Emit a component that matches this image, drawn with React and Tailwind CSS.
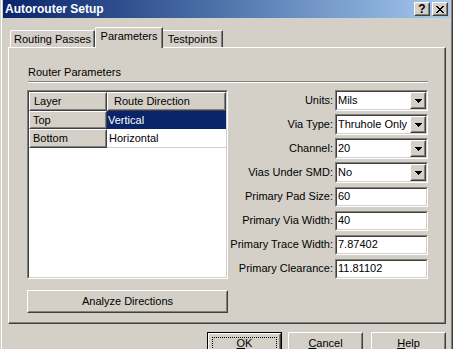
import React from "react";

function Raised({ className = "", inner = "", children }) {
  return (
    <div className={"border border-t-white border-l-white border-r-[#404040] border-b-[#404040] " + className}>
      <div className={"w-full h-full border border-t-[#D4D0C8] border-l-[#D4D0C8] border-r-[#808080] border-b-[#808080] " + inner}>
        {children}
      </div>
    </div>
  );
}

function Sunken({ className = "", inner = "", children }) {
  return (
    <div className={"border border-t-[#808080] border-l-[#808080] border-r-white border-b-white " + className}>
      <div className={"w-full h-full border border-t-[#404040] border-l-[#404040] border-r-[#D4D0C8] border-b-[#D4D0C8] " + inner}>
        {children}
      </div>
    </div>
  );
}

function Arrow() {
  return (
    <svg width="7" height="4" viewBox="0 0 7 4" shapeRendering="crispEdges">
      <rect x="0" y="0" width="7" height="1" fill="#000" />
      <rect x="1" y="1" width="5" height="1" fill="#000" />
      <rect x="2" y="2" width="3" height="1" fill="#000" />
      <rect x="3" y="3" width="1" height="1" fill="#000" />
    </svg>
  );
}

function Combo({ value }) {
  return (
    <Sunken className="h-[21px] w-[93px]" inner="bg-white flex items-center">
      <span className="flex-1 pl-[1px] leading-none whitespace-nowrap overflow-hidden">{value}</span>
      <Raised className="w-[16px] h-[17px] shrink-0 bg-[#D4D0C8]" inner="flex items-center justify-center">
        <Arrow />
      </Raised>
    </Sunken>
  );
}

function Edit({ value }) {
  return (
    <Sunken className="h-[20px] w-[93px]" inner="bg-white flex items-center">
      <span className="pl-[1px] leading-none">{value}</span>
    </Sunken>
  );
}

const fields = [
  ["Units:", "combo", "Mils"],
  ["Via Type:", "combo", "Thruhole Only"],
  ["Channel:", "combo", "20"],
  ["Vias Under SMD:", "combo", "No"],
  ["Primary Pad Size:", "edit", "60"],
  ["Primary Via Width:", "edit", "40"],
  ["Primary Trace Width:", "edit", "7.87402"],
  ["Primary Clearance:", "edit", "11.81102"],
];

export default function App() {
  return (
    <div className="w-[453px] h-[349px] overflow-hidden bg-[#D4D0C8] border-l border-l-[#D4D0C8] border-r border-r-[#404040] font-['Liberation_Sans',Arial,sans-serif] text-[11px] text-black">
      <div className="h-full border-l border-l-white border-r border-r-[#808080] px-[1px]">
        {/* Title bar */}
        <div className="h-[18px] flex items-center justify-between bg-linear-to-r from-[#0A246A] to-[#A6CAF0]">
          <span className="pl-[2px] text-white font-bold text-[12px] leading-none">Autorouter Setup</span>
          <div className="flex gap-[2px] pr-[2px]">
            <Raised className="w-[16px] h-[14px] bg-[#D4D0C8]" inner="flex items-center justify-center">
              <span className="font-bold text-[12px] leading-none">?</span>
            </Raised>
            <Raised className="w-[16px] h-[14px] bg-[#D4D0C8]" inner="flex items-center justify-center">
              <svg width="8" height="7" viewBox="0 0 8 7" shapeRendering="crispEdges">
                <path d="M0 0h2v1h-2zM6 0h2v1h-2zM1 1h2v1h-2zM5 1h2v1h-2zM2 2h4v1h-4zM3 3h2v1h-2zM2 4h4v1h-4zM1 5h2v1h-2zM5 5h2v1h-2zM0 6h2v1h-2zM6 6h2v1h-2z" fill="#000" />
              </svg>
            </Raised>
          </div>
        </div>

        {/* Tabs */}
        <div className="mt-[9px] ml-[7px] h-[20px] flex items-end">
          <div className="h-[17px] w-[85px] border-t border-l border-t-white border-l-white border-r border-r-[#404040] shadow-[inset_-1px_0_0_#808080] rounded-tl-[2px] flex items-center justify-center leading-none">
            Routing Passes
          </div>
          <div className="relative z-10 -mb-[1px] h-[21px] w-[68px] bg-[#D4D0C8] border-t border-l border-t-white border-l-white border-r border-r-[#404040] shadow-[inset_-1px_0_0_#808080] rounded-tl-[2px] flex items-start justify-center pt-[3px] leading-none">
            Parameters
          </div>
          <div className="h-[17px] w-[60px] border-t border-t-white border-r border-r-[#404040] shadow-[inset_-1px_0_0_#808080] flex items-center justify-center leading-none">
            Testpoints
          </div>
        </div>

        {/* Panel */}
        <div className="ml-[5px] w-[438px] h-[277px] border border-t-white border-l-white border-r-[#404040] border-b-[#404040] shadow-[inset_-1px_-1px_0_#808080] pl-[18px] pr-[17px]">
          <div className="mt-[18px] ml-[1px] leading-[13px]">Router Parameters</div>
          <div className="mt-[2px] ml-[1px] w-[400px] border-t border-t-[#808080] border-b border-b-white" />
          <div className="mt-[7px] flex justify-between">
            <div className="flex flex-col">
              <Sunken className="w-[201px] h-[189px]" inner="bg-white flex flex-col">
                <div className="flex h-[19px]">
                  <Raised className="w-[78px] h-full bg-[#D4D0C8]" inner="flex items-center pl-[3px] leading-none">Layer</Raised>
                  <Raised className="flex-1 h-full bg-[#D4D0C8]" inner="flex items-center pl-[5px] leading-none">Route Direction</Raised>
                </div>
                <div className="flex h-[18px]">
                  <Raised className="w-[78px] h-full bg-[#D4D0C8]" inner="flex items-center pl-[2px] leading-none">Top</Raised>
                  <div className="flex-1 h-full bg-[#0A246A] text-white flex items-center pl-[1px] leading-none">Vertical</div>
                </div>
                <div className="flex h-[19px]">
                  <Raised className="w-[78px] h-full bg-[#D4D0C8]" inner="flex items-center pl-[2px] leading-none">Bottom</Raised>
                  <div className="flex-1 h-full border-b border-b-[#D4D0C8] flex items-center pl-[2px] leading-none">Horizontal</div>
                </div>
              </Sunken>
              <Raised className="mt-[11px] w-[201px] h-[23px]" inner="flex items-center justify-center leading-none">
                Analyze Directions
              </Raised>
            </div>
            <div className="grid grid-cols-[auto_93px] gap-x-[2px] gap-y-[3px] items-center content-start">
              {fields.map(([label, kind, value]) => (
                <React.Fragment key={label}>
                  <div className="text-right leading-none whitespace-nowrap">{label}</div>
                  <div className="h-[21px] flex items-center">
                    {kind === "combo" ? <Combo value={value} /> : <Edit value={value} />}
                  </div>
                </React.Fragment>
              ))}
            </div>
          </div>
        </div>

        {/* Bottom buttons */}
        <div className="mt-[8px] flex">
          <div className="ml-[204px] w-[75px] h-[23px] border border-black">
            <Raised className="w-full h-full" inner="relative flex items-center justify-center leading-none">
              <div className="absolute inset-[2px] border border-dotted border-black" />
              <span><span className="underline">O</span>K</span>
            </Raised>
          </div>
          <Raised className="ml-[6px] w-[75px] h-[23px]" inner="flex items-center justify-center leading-none">
            <span><span className="underline">C</span>ancel</span>
          </Raised>
          <Raised className="ml-[8px] w-[75px] h-[23px]" inner="flex items-center justify-center leading-none">
            <span><span className="underline">H</span>elp</span>
          </Raised>
        </div>
      </div>
    </div>
  );
}
